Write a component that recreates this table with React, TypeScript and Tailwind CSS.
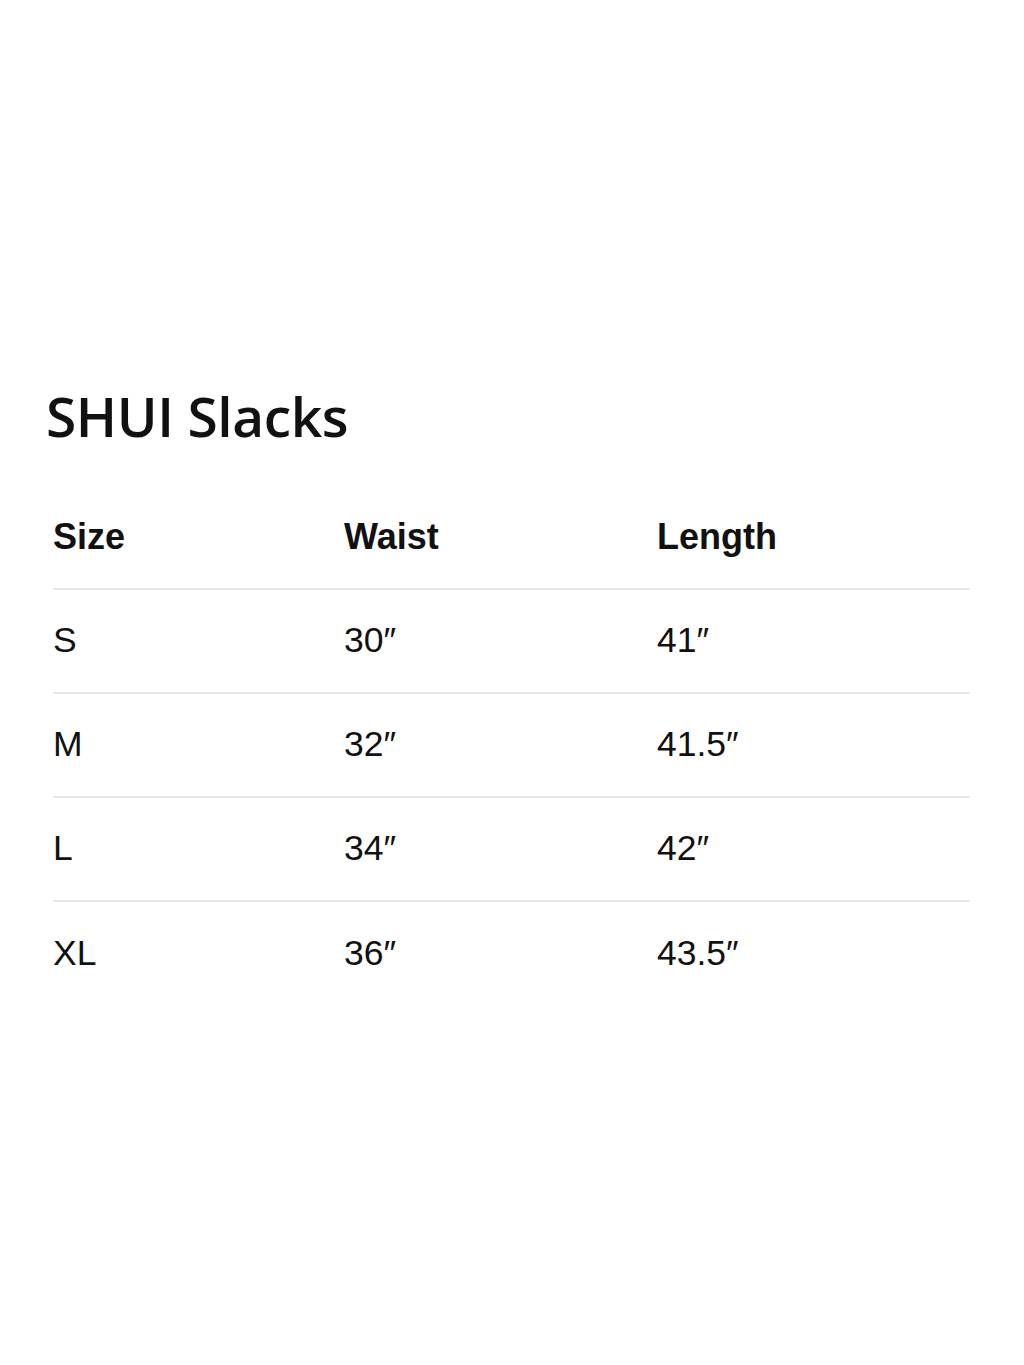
const rows = [
  { size: "S", waist: "30″", length: "41″" },
  { size: "M", waist: "32″", length: "41.5″" },
  { size: "L", waist: "34″", length: "42″" },
  { size: "XL", waist: "36″", length: "43.5″" },
];

export default function App() {
  return (
    <div className="min-h-[1365px] w-full bg-white text-[#111111] pt-[381px] px-[46px]">
      <h1
        className="h-[70px] flex items-center text-[55px] font-semibold tracking-[-0.4px]"
        style={{ fontFamily: '"Open Sans", sans-serif' }}
      >
        SHUI Slacks
      </h1>

      <div
        className="mt-[35px] ml-[7px] mr-[8px]"
        style={{ fontFamily: '"Liberation Sans", Arial, sans-serif' }}
      >
        <div className="grid grid-cols-[291px_313px_1fr] items-center h-[104px] border-b-2 border-[#e8e8e8] text-[36px] font-bold">
          <div>Size</div>
          <div>Waist</div>
          <div>Length</div>
        </div>
        {rows.map((r, i) => (
          <div
            key={r.size}
            className={
              "grid grid-cols-[291px_313px_1fr] items-center h-[104px] text-[35.5px] " +
              (i < rows.length - 1 ? "border-b-2 border-[#e8e8e8]" : "")
            }
          >
            <div>{r.size}</div>
            <div>{r.waist}</div>
            <div>{r.length}</div>
          </div>
        ))}
      </div>
    </div>
  );
}
